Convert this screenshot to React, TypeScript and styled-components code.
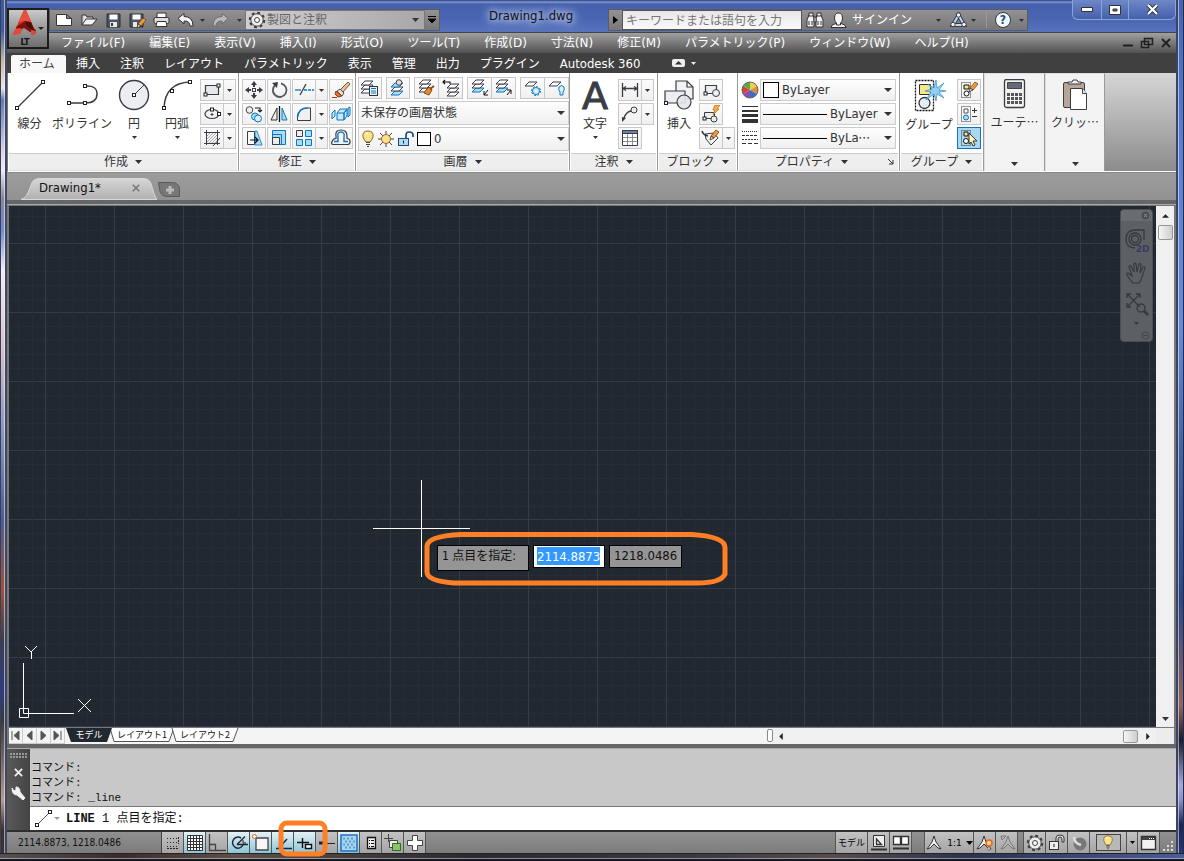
import React from "react";
import styled, { createGlobalStyle, css } from "styled-components";

const UI = `"DejaVu Sans Condensed", "Noto Sans", "Noto Sans CJK JP", sans-serif`;
const WIDE = `"DejaVu Sans", "Noto Sans", "Noto Sans CJK JP", sans-serif`;
const CJK = `"Noto Sans CJK JP", sans-serif`;
const INK = "#3a3c46";
const BLUE = "#0a76c4";
const SKY = "#a9dcf3";
const ORANGE = "#ff7f27";

const GlobalStyle = createGlobalStyle`
  *, *::before, *::after { box-sizing: border-box; }
  body { margin: 0; background: #1d2740; }
  body, button, input, select { font-family: ${UI}; font-size: 12px; line-height: 16px; color: #333; }
  button, input, select { margin: 0; padding: 0; border: 0; background: none; border-radius: 0; }
  svg { display: block; flex: none; }
`;

/* ---------- icon drawings ---------- */

const node = (x: number, y: number) => (
  <rect x={x - 1.5} y={y - 1.5} width="3" height="3" fill="#fff" stroke="#222" strokeWidth="1" />
);
const sheet = (x: number, y: number, fill = "#fff", stroke = INK) => (
  <path d={`M${x} ${y + 4}h8l4-4h-8z`} fill={fill} stroke={stroke} strokeLinejoin="round" />
);
const stack = (x: number, y: number, top = "#fff", bottom = "#fff") => (
  <g>
    {sheet(x, y + 8, bottom, bottom === "#fff" ? INK : BLUE)}
    {sheet(x, y + 4)}
    {sheet(x, y, top, top === "#fff" ? INK : BLUE)}
  </g>
);
const pencil = (x: number, y: number) => (
  <g transform={`translate(${x} ${y})`}>
    <path d="M2 6L7 0l3 2-5 6z" fill="#f39a3a" stroke="#7a4010" strokeWidth=".8" />
    <path d="M2 6l-1 4 4-2z" fill="#f5d9b5" stroke="#333" strokeWidth=".8" />
  </g>
);

type Drawing = [number, number, React.ReactNode];

const drawings: Record<string, Drawing> = {
  logo: [24, 28, <g>
    <path d="M11 0L0 25q4-2 7-2l4-7 7 3 1 6q2 0 4-2L13 0z" fill="#c92a1b" />
    <path d="M11 0L5 13l6-2 3 2 4-1-5-12z" fill="#e8503a" />
    <path d="M3 17l8-5 12 8v3l-6-1-6-4-6 3z" fill="#7c1212" />
    <path d="M11 11l7 1 4 10-8-6z" fill="#4f0c0c" />
    <path d="M0 25q0-6 6-7l4 1-3 5q-4 1-7 1zM18 20l5 1q0 4-5 4z" fill="#e34a36" />
  </g>],
  new: [18, 14, <path d="M1.500 1.500h10l5 4v7h-15zM11.500 1.500v4h5" fill="#fff" stroke="#343434" />],
  open: [17, 14, <g><path d="M1 12V2h4l1 2h6v3" fill="#ddd" stroke="#343434" /><path d="M1 12l4-6h11l-5 6z" fill="#f4f4f4" stroke="#343434" /></g>],
  save: [15, 15, <g><path d="M1 1h13v13H1z" fill="#4b5568" stroke="#2c2c2c" /><path d="M3.500 1.500h8v5h-8z" fill="#fff" /><path d="M4 9h7v5H4z" fill="#e8e8e8" /><path d="M5 10h2v3H5z" fill="#333" /></g>],
  saveAs: [17, 15, <g><path d="M1 1h13v13H1z" fill="#4b5568" stroke="#2c2c2c" /><path d="M3.500 1.500h8v5h-8z" fill="#fff" /><path d="M4 9h4v5H4z" fill="#e8e8e8" />{pencil(7, 5)}</g>],
  print: [17, 16, <g><path d="M4 1h9v5H4z" fill="#fff" stroke="#343434" /><rect x="1" y="5.500" width="15" height="6" rx="1.500" fill="#ddd" stroke="#343434" /><path d="M4 9.500h9l1 5H3z" fill="#fff" stroke="#343434" /></g>],
  undo: [17, 14, <path d="M1 5.500l6-5v3q9 0 9 9.500h-3q0-5-6-5v3z" fill="#f4f4f4" stroke="#303030" strokeLinejoin="round" />],
  redo: [17, 14, <path d="M16 5.500l-6-5v3q-9 0-9 9.500h3q0-5 6-5v3z" fill="#b8b8b8" stroke="#6c6c6c" strokeLinejoin="round" />],
  gear: [18, 18, <g><circle cx="9" cy="9" r="7" fill="none" stroke="#3a3a3a" strokeWidth="2.500" strokeDasharray="2.750 2.750" /><circle cx="9" cy="9" r="6.200" fill="#eee" stroke="#444" /><circle cx="9" cy="9" r="2.500" fill="#fff" stroke="#444" /></g>],
  binoculars: [18, 16, <g fill="#f2f2f2" stroke="#303030"><path d="M3 3h4l1 3v9H1V8zM15 3h-4l-1 3v9h7V8z" /><path d="M3 1h4v3H3zM11 1h4v3h-4zM8 5h2v5H8z" /><path d="M3 9v4M6 9v4M12 9v4M15 9v4" /></g>],
  user: [17, 17, <g fill="#f6f6f6" stroke="#303030"><path d="M1 15.500q0-3 5-4l5 0q5 1 5 4z" /><path d="M8.500 1q4 0 4 5 0 4-2 5v2h-4v-2q-2-1-2-5 0-5 4-5z" /></g>],
  exchange: [17, 16, <g fill="none"><path d="M8.500 3L3 13h11z" stroke="#333d55" strokeWidth="4" /><path d="M8.500 3L3 13h11z" stroke="#cfd6e6" strokeWidth="2" /><g fill="#f0f2f8" stroke="#333d55"><circle cx="8.500" cy="3" r="2.200" /><circle cx="3" cy="12.500" r="2.200" /><circle cx="14" cy="12.500" r="2.200" /></g></g>],
  line: [32, 32, <g><path d="M3 29L29 3" stroke={INK} strokeWidth="1.300" />{node(3, 29)}{node(29, 3)}</g>],
  polyline: [32, 32, <g><path d="M3 24h16q12 0 12-9T19 7" fill="none" stroke={INK} strokeWidth="1.500" />{node(3, 24)}{node(19, 24)}{node(19, 7)}</g>],
  circle: [32, 32, <g><circle cx="16" cy="16" r="14.500" fill="#eceef1" stroke={INK} strokeWidth="1.400" /><path d="M16 16L26 6" stroke={INK} />{node(16, 16)}</g>],
  arc: [32, 32, <g><path d="M3 29Q4 4 29 3" fill="none" stroke={INK} strokeWidth="1.400" />{node(3, 29)}{node(11, 12)}{node(29, 3)}</g>],
  rect: [20, 18, <g><path d="M3.500 4.500h13v9h-13z" fill="#e6e8ec" stroke={INK} strokeWidth="1.200" />{node(3.500, 13.500)}{node(16.500, 4.500)}</g>],
  ellipse: [20, 18, <g><ellipse cx="10" cy="9" rx="7" ry="4.500" fill="#f2f2f2" stroke={INK} strokeWidth="1.200" />{node(10, 4.500)}{node(17, 9)}<path d="M8.500 9.500h3M10 8v3" stroke={INK} /></g>],
  hatch: [20, 18, <g stroke={INK} fill="none"><path d="M4.500 1v15M15.500 1v15M2 3.500h16M2 14.500h16" /><path d="M5 7l3-3M5 10l6-6M5 13l9-9M7 14l8-8M10 14l5-5" strokeWidth=".6" stroke="#777" /><path d="M11 17l7-8" /></g>],
  move: [20, 18, <g fill={INK}><path d="M10 0l3 4h-2v2H9V4H7zM10 18l3-4h-2v-2H9v2H7zM1 9l4-3v2h2v2H5v2zM19 9l-4-3v2h-2v2h2v2z" /><rect x="8.500" y="7.500" width="3" height="3" fill="#fff" stroke={INK} /></g>],
  rotate: [20, 18, <g><path d="M7 3.500a6.800 6.800 0 1 0 5-1" fill="none" stroke="#555962" strokeWidth="1.800" /><path d="M3 2l6-1-1 6z" fill={INK} /></g>],
  trim: [20, 18, <g fill="none" strokeWidth="1.300"><path d="M1 9h6" stroke={BLUE} /><path d="M6 14L12 3" stroke={INK} /><path d="M10 9h10" stroke={BLUE} strokeDasharray="3 1" /></g>],
  erase: [20, 18, <g><path d="M9 9L17 1l2 2-7 8z" fill="#e9c394" stroke="#6b4020" strokeWidth=".9" /><path d="M6 10l3-2 4 4-2 3z" fill="#ddd" stroke="#444" strokeWidth=".9" /><path d="M5 10l6 5-4 1-3-3z" fill="#e86b35" stroke="#8a3010" strokeWidth=".9" /><path d="M1 16.500h5" stroke="#b03030" /></g>],
  copy: [20, 18, <g fill="none"><circle cx="5.500" cy="5" r="3.300" fill="#eee" stroke="#444" /><circle cx="11" cy="11.500" r="3.500" fill={SKY} stroke={BLUE} /><circle cx="14" cy="13.500" r="3.500" stroke={BLUE} fill="#d8f0fa" /><path d="M11 3h5v3M14 5l2 2 2-2" stroke="#222" strokeWidth="1.200" /></g>],
  mirror: [20, 18, <g><path d="M8 3v12H2z" fill="#eee" stroke="#333" /><path d="M10.500 1v16" stroke="#111" strokeWidth="1.300" /><path d="M13 3v12h5z" fill={SKY} stroke={BLUE} /></g>],
  fillet: [20, 18, <g fill="none"><path d="M3.500 15.500V12q1-9 10-9h3v12.500z" fill="#f0f0f0" stroke={INK} /><path d="M3.500 12q1-9 10-9" stroke={BLUE} strokeWidth="1.500" /></g>],
  explode: [20, 18, <g fill="#c9e9f7" stroke={BLUE}><path d="M1 8l3-3v6l-3 3zM6 8h7v7H6zM6 8l3-4h7l-3 4M13 8l3-4v7l-3 4zM17 3l2-1v8l-2 2z" /></g>],
  stretch: [20, 18, <g><path d="M3.500 2.500h7v13h-7z" fill="#fff" stroke={INK} /><path d="M11 2h2l5 14h-7z" fill={SKY} stroke={BLUE} strokeWidth=".8" /><path d="M6 11h8M11 8l3 3-3 3" stroke="#111" fill="none" strokeWidth="1.200" /></g>],
  scale: [20, 18, <g><path d="M3.500 1.500h13v14h-13z" fill={SKY} stroke={BLUE} /><path d="M3.500 5.500h9v10" fill="none" stroke={BLUE} /><path d="M3.500 8.500h7v7h-7z" fill="#eee" stroke={INK} /></g>],
  array: [20, 18, <g stroke={BLUE} fill={SKY}><path d="M2.500 1.500h6v6h-6z" fill="#eee" stroke={INK} /><path d="M11.500 1.500h6v6h-6zM2.500 10.500h6v6h-6zM11.500 10.500h6v6h-6z" /></g>],
  offset: [20, 18, <g fill="none"><path d="M4 12.500h4V8q-1-5 3-5t3 5v4.500h4" stroke={BLUE} strokeWidth="1.400" transform="translate(-1 0)" /><path d="M2 15.500h15q2 0 2-3t-3-3V7q0-6-6-6T5 7v2.500q-3 0-4 3t1 3z" stroke={INK} strokeWidth="1.200" /></g>],
  layerProps: [20, 18, <g>{stack(1, 2)}<rect x="9.500" y="7.500" width="8" height="9" fill="#e8f4fb" stroke="#333" /><path d="M11 9.500h5M11 12h5M11 14h5" stroke={BLUE} strokeWidth="1" /></g>],
  layerOff: [20, 18, <g>{sheet(3, 12, SKY, BLUE)}{sheet(3, 8)}{sheet(3, 4, SKY, BLUE)}<circle cx="11" cy="3.500" r="2.800" fill="#ddd" stroke="#444" /></g>],
  layerMatch: [20, 18, <g>{stack(2, 1)}<path d="M9 11l3-3 3 3-3 5-5-2z" fill="#e28a3a" stroke="#8a4a10" /><path d="M13 10l4-3" stroke="#8a4a10" strokeWidth="2" /></g>],
  layerPrev: [20, 18, <g>{stack(6, 5)}<path d="M9 5V3H2M4 1L2 3l2 2" stroke="#111" fill="none" strokeWidth="1.200" /></g>],
  layerIso: [20, 18, <g>{stack(2, 1, "#fff", SKY)}<path d="M18 11l-4 5M14 12v4h4" stroke="#111" fill="none" /></g>],
  layerUniso: [20, 18, <g>{stack(2, 1, "#fff", SKY)}<path d="M13 16l4-5M13 11h4v4" stroke="#111" fill="none" /></g>],
  layerFreeze: [20, 18, <g>{sheet(2, 3)}<g stroke={BLUE} fill="#d8effa"><circle cx="13" cy="12" r="3.500" /><circle cx="13" cy="12" r="4.500" fill="none" strokeDasharray="2 1.500" /></g></g>],
  layerBulb: [20, 18, <g>{sheet(2, 3)}<path d="M12 8q3-3 5 0 1 3-1 5v3h-3v-3q-2-2-1-5z" fill="#d8effa" stroke={BLUE} /></g>],
  bulb: [14, 18, <g><path d="M7 1q6 0 5 6-1 3-3 5H5Q3 10 2 7 1 1 7 1z" fill="#fbe28b" stroke="#8a6a20" /><path d="M5 12.500h4M5 14.500h4M6 16.500h2" stroke="#444" /><path d="M5 4q1-1 2-1" stroke="#fff" strokeWidth="1.500" fill="none" /></g>],
  sun: [16, 16, <g><path d="M8 0v16M0 8h16M2 2l12 12M14 2L2 14" stroke="#444" /><circle cx="8" cy="8" r="4.500" fill="#fbdf8a" stroke="#a06a20" /></g>],
  unlock: [17, 16, <g><rect x="1.500" y="7.500" width="10" height="7" fill={SKY} stroke="#1b4a7a" /><path d="M9 7V4q0-3 3-3 4 0 4 3v2" fill="none" stroke="#1b4a7a" strokeWidth="1.700" /><path d="M6.500 9.500v3" stroke="#123" /></g>],
  dim: [20, 18, <g stroke={INK} fill="none" strokeWidth="1.300"><path d="M2.500 2v14M17.500 2v14M3 7.500h14" /><path d="M6 5.500L3 7.500l3 2M14 5.500l3 2-3 2" /></g>],
  leader: [20, 18, <g><path d="M4 13q2-6 7-7" stroke={INK} fill="none" strokeWidth="1.300" /><path d="M2 17l0-5 4 1z" fill={INK} /><circle cx="14" cy="5" r="3" fill="#eee" stroke={INK} /></g>],
  table: [20, 18, <g><path d="M2.500 1.500h15v15h-15z" fill="#fff" stroke={INK} /><path d="M2.500 1.500h15v3h-15z" fill="#6c7fa5" stroke={INK} /><path d="M2.500 8.500h15M2.500 12.500h15M7.500 5v11M12.500 5v11" stroke="#777" strokeWidth=".8" /></g>],
  insert: [32, 32, <g stroke={INK} strokeWidth="1.200"><path d="M13 2h11l6 6v12H13zM24 2v6h6" fill="#f2f2f2" /><path d="M2 12h20v12H2z" fill="#eceef1" /><circle cx="21" cy="23" r="7" fill="#e4e6ea" fillOpacity=".9" />{node(3, 24)}</g>],
  block: [20, 18, <g stroke={INK}><path d="M4.500 4.500h11v8h-11z" fill="#eceef1" strokeWidth="1.200" /><circle cx="15" cy="12" r="3.500" fill="#eee" />{node(4.500, 12.500)}</g>],
  blockEdit: [20, 18, <g stroke={INK}><path d="M3.500 7.500h10v6h-10z" fill="#eceef1" /><circle cx="13" cy="14" r="3" fill="#eee" />{node(3.500, 13.500)}<path d="M14 0l5 0-3 4h2l-6 6 2-5h-2z" fill="#f9b23a" stroke="#b8640c" strokeWidth=".7" /></g>],
  attr: [20, 18, <g><path d="M4 5l9-1 4 5-7 7-5-6z" fill="#f2f2f2" stroke={INK} /><path d="M1 2q1 4 6 5" stroke="#333" fill="none" strokeWidth="1.500" />{pencil(8, 1)}</g>],
  wheel: [18, 18, <g><path d="M9 9V1a8 8 0 0 1 7 4z" fill="#e8d24a" /><path d="M9 9l7-4a8 8 0 0 1 0 8z" fill="#e58a35" /><path d="M9 9l7 4a8 8 0 0 1-7 4z" fill="#3a6fc8" /><path d="M9 9v8a8 8 0 0 1-7-4z" fill="#8a4db5" /><path d="M9 9l-7 4a8 8 0 0 1 0-8z" fill="#d8412f" /><path d="M9 9L2 5a8 8 0 0 1 7-4z" fill="#58a84a" /><circle cx="9" cy="9" r="8" fill="none" stroke="#666" /></g>],
  weights: [18, 18, <path d="M1 1h16v1H1zM1 5h16v2H1zM1 9h16v3H1zM1 14h16v4H1z" fill="#333" />],
  types: [18, 18, <g stroke="#333"><path d="M1 2.500h16" strokeDasharray="1 1" /><path d="M1 6.500h16" strokeDasharray="3 1" /><path d="M1 10.500h16" strokeDasharray="2 1" /><path d="M1 14.500h16" strokeDasharray="4 2" /></g>],
  group: [34, 33, <g><path d="M3.500 1.500h18v30h-18z" fill="none" stroke="#111" strokeDasharray="2 1" strokeWidth="1.300" /><path d="M7.500 5.500h11v10h-11z" fill="#f2e88a" stroke="#333" /><circle cx="12.500" cy="24" r="5.500" fill="#e4eef4" stroke="#333" strokeWidth="1.300" /><path d="M24 1l1 8 7-5-5 7 7 1-7 1 5 6-7-4-1 7-2-7-8 6 5-8-6-1 7-2-4-5 6 4z" fill="#8fd0f0" stroke="#3a8ac0" strokeWidth=".7" /></g>],
  ungroup: [20, 18, <g><path d="M2.500 1.500h9v15h-9z" fill="none" stroke="#333" strokeDasharray="1 1" /><path d="M5 4h5v4H5z" fill="#f2e88a" stroke="#111" /><circle cx="7.500" cy="12.500" r="2.500" fill="#fff" stroke="#111" />{pencil(9, 1)}</g>],
  groupEdit: [20, 18, <g><path d="M2.500 1.500h9v15h-9z" fill="none" stroke="#333" strokeDasharray="1 1" /><path d="M5 4h4v4H5z" fill="#fff" stroke="#555" /><circle cx="7" cy="12.500" r="2.500" fill={SKY} stroke={BLUE} /><path d="M13 5.500h5M15.500 3v5M13 11.500h5" stroke="#333" /></g>],
  groupSelect: [20, 18, <g><path d="M2.500 1.500h9v15h-9z" fill="none" stroke="#333" strokeDasharray="1 1" /><path d="M5 3h4v4H5z" fill="#f2e88a" stroke="#111" /><circle cx="7" cy="12" r="2.500" fill="#fff" stroke="#111" /><path d="M10 4l8 8-4 0 2 4-2 1-2-4-2 2z" fill="#fff4b8" stroke="#333" /></g>],
  calc: [24, 30, <g><rect x="1.500" y=".5" width="20" height="28" rx="2" fill="#f4f4f4" stroke={INK} strokeWidth="1.300" /><path d="M4.500 3.500h14v6h-14z" fill="#666a76" stroke="#444" /><path d="M4 15.500h15M4 19.500h15M4 23.500h15" stroke="#555" strokeWidth="3" strokeDasharray="3 1" /></g>],
  clipboard: [26, 32, <g stroke={INK}><rect x="1.500" y="3.500" width="21" height="25" rx="1.500" fill="#b9a598" /><path d="M6 5V3h4l1-2h4l1 2h3v2z" fill="#eee" /><path d="M8.500 9.500h12l4 5v16h-16z" fill="#fff" /><path d="M20.500 9.500v5h4" fill="#eee" /></g>],
  wheel2d: [26, 26, <g fill="none" stroke="#34383f" strokeWidth="1.300"><path d="M11 20q-9 0-9-9 0-9 10-9h8v10" /><circle cx="11" cy="11" r="6" /><circle cx="11" cy="11" r="3.500" /></g>],
  hand: [24, 24, <path d="M8 22q-4-4-6-8-1-2 1-2l4 3L4 6q0-2 2-1l3 6V3q1-2 2 0l1 8 2-8q2-1 2 1l-1 8 3-6q2-1 2 1l-3 9q-1 4-3 6z" fill="none" stroke="#34383f" strokeWidth="1.100" />],
  zoomExt: [24, 24, <g fill="none" stroke="#34383f" strokeWidth="1.300"><path d="M2 2l13 13M15 2L2 15M2 6V2h4M11 2h4v4M2 11v4h4" /><circle cx="16" cy="16" r="4" /><path d="M19 19l4 4" strokeWidth="2.500" /></g>],
  wrench: [15, 15, <path d="M1 2l2 3 2-1V1q4 0 4 5l5 6-2 2-6-5Q1 9 1 2z" fill="#f2f2f2" stroke="#f2f2f2" />],
  cmdLine: [18, 18, <g><path d="M2 15L15 2" stroke="#555" />{node(2, 15)}{node(15, 2)}</g>],
  snap: [18, 18, <g stroke="#222" fill="none"><path d="M3 4.500h10M3 8.500h10M3 12.500h10" strokeDasharray="1 2" /><path d="M14.500 3v7M3 14.500h12" strokeDasharray="2 1" /></g>],
  grid: [18, 18, <path d="M1.500 1.500h15v15h-15zM4.500 2v15M7.500 2v15M10.500 2v15M13.500 2v15M2 4.500h15M2 7.500h15M2 10.500h15M2 13.500h15" fill="#fff" stroke="#333" />],
  ortho: [18, 18, <path d="M1.500 0v16.500h17M1.500 10.500h6v6" fill="none" stroke="#444" strokeWidth="1.300" />],
  polar: [18, 18, <g fill="none" stroke="#223"><path d="M11 4a5.500 5.500 0 1 0 2 7" strokeWidth="1.500" /><path d="M7 10.500h11M7 10.500l8-8" strokeWidth="1.300" /><path d="M13 6v3h3" /></g>],
  osnap: [18, 18, <g><path d="M4 4h12v12H4z" fill="#f6f6f6" stroke="#444" strokeWidth="1.300" /><circle cx="2.500" cy="2.500" r="2" fill="#fff" stroke="#e8641c" /></g>],
  otrack: [18, 18, <g fill="none" stroke="#223"><path d="M2 14.500h5M9 14.500h9" strokeWidth="1.500" /><path d="M5 14l8-9" strokeWidth="1.500" /></g>],
  dyn: [18, 18, <g fill="none" stroke="#111" strokeWidth="1.400"><path d="M6.500 4v10M1 8.500h12" /><path d="M9.500 10.500h6v4h-6z" fill="#fff" /></g>],
  lwt: [18, 18, <g stroke="#222"><path d="M1 9h8" strokeWidth="3" /><path d="M9 9.500h8" /></g>],
  transp: [20, 20, <g><rect x="2" y="2" width="16" height="16" fill="#a7d5ee" stroke="#1f6fc4" strokeWidth="1.500" /><path d="M4 5.500h12M6 8.500h12M4 11.500h12M6 14.500h11" stroke="#5b9fd0" strokeDasharray="2 2" strokeWidth="2" /></g>],
  qp: [18, 18, <g><path d="M5.500 3.500h8v11h-8z" fill="#eee" stroke="#111" strokeWidth="1.300" /><path d="M7 6.500h1M9 6.500h3M7 9.500h1M9 9.500h3M7 12.500h1M9 12.500h3" stroke="#111" /></g>],
  cycle: [18, 18, <g stroke="#444"><path d="M4.500 0v8M0 4.500h9" fill="none" /><path d="M5.500 6.500h8v7h-8z" fill="#eee" /><path d="M8.500 9.500h8v7h-8z" fill="#8cc26a" stroke="#2c6a1c" /></g>],
  plus: [18, 18, <path d="M6.500 1.500h5v5h5v5h-5v5h-5v-5h-5v-5h5z" fill="#fff" stroke="#444" />],
  sheetTri: [18, 18, <g><path d="M3.500 1.500h11v11h-11z" fill="#eee" stroke="#333" /><path d="M6.500 5l5 5.500h-5z" fill="none" stroke="#333" strokeWidth="1.300" /><path d="M1 15.500h16" stroke="#333" strokeWidth="2" /></g>],
  sheets: [18, 18, <g><path d="M1.500 2.500h7v8h-7zM9.500 2.500h7v8h-7z" fill="#fff" stroke="#333" strokeWidth="1.300" /><path d="M1 14.500h16" stroke="#333" strokeWidth="2" /></g>],
  scaleA: [18, 18, <path d="M9 2l2 6 5 7-3-1-4-4-4 4-3 1 5-7z" fill="#f4f4f4" stroke="#333" />],
  scaleB: [18, 18, <g><path d="M8 2l2 6 5 7-3-1-4-4-4 4-3 1 5-7z" fill="#f4f4f4" stroke="#333" /><circle cx="13" cy="9" r="3" fill="#fdd27a" stroke="#e8641c" strokeWidth="1.500" /><path d="M12 13h2v3h-2z" fill="#fff" stroke="#555" strokeWidth=".7" /></g>],
  scaleC: [18, 18, <path d="M10 2l2 6 5 7-3-1-4-4-4 4-3 1 5-7zM3 2h5L4 6z" fill="#b8b8b8" stroke="#777" />],
  lockStatus: [18, 18, <g><rect x="1.500" y="7.500" width="9" height="8" fill="#eee" stroke="#333" /><path d="M8 7V4q0-3 4-3 4 0 4 3v4h-2V5q0-2-2-2t-2 2v2" fill="#eee" stroke="#333" /><path d="M6 10v3" stroke="#111" /></g>],
  hardware: [18, 18, <g><circle cx="10" cy="10" r="6.500" fill="#777" /><path d="M4 3q0 6 7 8" stroke="#ddd" strokeWidth="2.500" fill="none" /></g>],
  screen: [18, 18, <g><path d="M1.500 2.500h14v13h-14z" fill="#f2f2f2" stroke="#333" strokeWidth="1.400" /><path d="M2 3h13v3H2z" fill="#444" /><path d="M9 4.500h5" stroke="#fff" strokeDasharray="1 1" /></g>],
  grip: [14, 14, <path d="M10 2h2v2h-2zM6 6h2v2H6zM10 6h2v2h-2zM2 10h2v2H2zM6 10h2v2H6zM10 10h2v2h-2z" fill="#ddd" />],
  restoreDoc: [14, 12, <path d="M4.500 1.500h8v6h-8zM1.500 4.500h7v6h-7z" fill="#777" stroke="#222" strokeWidth="1.500" />],
};

const Icon = ({ name, size }: { name: string; size?: number }) => {
  const [w, h, art] = drawings[name];
  const k = size ? size / w : 1;
  return (
    <svg width={Math.round(w * k)} height={Math.round(h * k)} viewBox={`0 0 ${w} ${h}`} fill="none" aria-hidden="true">
      {art}
    </svg>
  );
};

const Caret = ({ w = 7, color = "#333" }: { w?: number; color?: string }) => (
  <svg width={w} height={Math.ceil(w / 2)} viewBox="0 0 8 4" preserveAspectRatio="none" aria-hidden="true">
    <path d="M0 0h8L4 4z" fill={color} />
  </svg>
);

const Cross = ({ size, color, weight = 2 }: { size: number; color: string; weight?: number }) => (
  <svg width={size} height={size} viewBox="0 0 10 10" aria-hidden="true">
    <path d="M1 1l8 8M9 1L1 9" stroke={color} strokeWidth={weight} />
  </svg>
);

/* ---------- window frame ---------- */

const Frame = styled.div`
  min-height: 100vh;
  display: grid;
  grid-template: 1fr 8px / 7px minmax(0, 1fr) 8px;
  background: #4763ae;
`;
const Edge = styled.div<{ $side: "left" | "right" }>`
  ${(p) => p.$side === "left" ? css`
    background: linear-gradient(#3f5aa4 0, #3d5ba4 30px, #c9b699 60px, #efe6e8 88px, #5e7cba 100px, #dcd2ea 150px, #f1e9f8 170px,
      #8a86a0 198px, #6d8cd0 230px, #f4ecf8 270px, #d8c0c8 350px, #8c98c8 430px, #4a5c98 520px, #a0503c 590px, #3c3c50 640px,
      #2c3c90 690px, #383840 720px, #b89c90 800px, #3c3034 830px);
  ` : css`
    background: linear-gradient(#4763ae 0, #5f7fd0 150px, #6b8ad4 330px, #45619f 450px, #2c4580 600px, #94655c 705px,
      #1c1c28 740px, #a8a8d8 785px, #8c90c0 800px, #1a2450 825px, #2c3c78 860px);
  `}
  border-left: ${(p) => (p.$side === "left" ? "1px solid #39404e" : "2px solid #3a4566")};
  border-right: ${(p) => (p.$side === "left" ? "2px solid #3e4860" : "1px solid #1e2c54")};
  box-shadow: inset ${(p) => (p.$side === "left" ? "-1px" : "1px")} 0 0 rgba(240, 244, 255, 0.55);
`;
const BottomEdge = styled.div`
  grid-column: 1 / -1;
  border-top: 1px solid #222;
  border-bottom: 2px solid #14171f;
  background: linear-gradient(90deg, #5a5050, #3a2c2c 10%, #5c5048 20%, #2a2a30 40%, #3c3a44 60%, #5a4c4c 70%, #2c3350 82%, #4c5c98);
  box-shadow: inset 0 -1px 0 rgba(220, 220, 230, 0.55);
`;
const Body = styled.main`
  display: flex;
  flex-direction: column;
  min-width: 0;
  position: relative;
`;

/* ---------- title bar ---------- */

const Row = styled.div<{ $gap?: number }>`
  display: flex;
  align-items: center;
  gap: ${(p) => p.$gap ?? 0}px;
`;
const TitleBar = styled.header`
  height: 32px;
  display: flex;
  align-items: flex-end;
  padding: 0 148px 1px 42px;
  background: linear-gradient(#2a3d7a 0, #7f97d2 2px, #4560ac 4px, #4a66b2 60%, #5874be);
`;
const GreyBar = styled.div`
  height: 22px;
  display: flex;
  align-items: center;
  background: linear-gradient(#929292, #777);
  border: 1px solid #5c5c5c;
`;
const AppButton = styled.button`
  position: absolute;
  left: 0;
  top: 8px;
  width: 42px;
  height: 41px;
  z-index: 2;
  border: 2px solid #1c1c1c;
  background: linear-gradient(#c9c9c9, #6d6d6d);
  display: grid;
  grid-template-columns: 28px 8px;
  align-items: center;
  justify-items: center;
`;
const AppMark = styled.span`
  display: flex;
  flex-direction: column;
  align-items: center;
  padding-left: 4px;
  font: bold 9px/9px ${UI};
  color: #111;
`;
const ToolButton = styled.button<{ $w?: number }>`
  width: ${(p) => p.$w ?? 24}px;
  height: 20px;
  display: flex;
  align-items: center;
  justify-content: center;
`;
const Select = styled.select<{ $color?: string; $latin?: boolean }>`
  appearance: none;
  flex: 1;
  width: 0;
  min-width: 0;
  height: 18px;
  color: ${(p) => p.$color ?? "#333"};
  ${(p) => p.$latin && css`font-size: 13px;`}
`;
const Workspace = styled.div`
  width: 180px;
  height: 20px;
  display: flex;
  align-items: center;
  gap: 1px;
  padding: 0 5px 0 2px;
  background: linear-gradient(90deg, #cfcfcf, #a8a8a8);
  border: 1px solid #777;
`;
const Title = styled.h1`
  flex: 1;
  margin: 0;
  align-self: center;
  padding: 1px 0 0 14px;
  text-align: center;
  font-size: 13px;
  font-weight: 400;
  color: #111;
  text-shadow: 0 0 6px #c8d4f4, 0 0 10px #c8d4f4, 0 0 12px #c8d4f4;
`;
const Search = styled.input`
  width: 180px;
  height: 20px;
  padding: 2px 3px 0;
  border: 1px solid #555;
  background: linear-gradient(#e6e6e6, #fafafa);
  &::placeholder { color: #777; opacity: 1; }
`;
const SignIn = styled.button`
  display: flex;
  align-items: center;
  gap: 5px;
  width: 97px;
  padding-left: 2px;
  color: #fff;
  white-space: nowrap;
`;
const BarDivider = styled.span`
  width: 1px;
  height: 16px;
  margin: 0 3px 0 6px;
  background: #9a9a9a;
`;
const Help = styled.span`
  width: 16px;
  height: 16px;
  border-radius: 50%;
  border: 1px solid #2c3a50;
  background: #f4f8fc;
  color: #1c4a80;
  font: bold 12px/14px ${UI};
`;
const WindowButtons = styled.div`
  position: absolute;
  right: 0;
  top: 0;
  height: 20px;
  display: flex;
  border: 1px solid #8ea2d8;
  border-top: 0;
  border-radius: 0 0 6px 6px;
  background: linear-gradient(#6f88c8, #4560ac);
`;
const WindowButton = styled.button<{ $w: number }>`
  width: ${(p) => p.$w}px;
  display: grid;
  place-items: center;
  & + & { border-left: 1px solid #8ea2d8; }
`;

/* ---------- menu and ribbon tabs ---------- */

const MenuBar = styled.nav`
  height: 21px;
  display: flex;
  align-items: center;
  gap: 24px;
  padding: 0 5px 0 54px;
  border-top: 1px solid #444;
  background: linear-gradient(#a0a0a0, #525252);
`;
const MenuItem = styled.button`
  color: #fff;
  font-family: ${WIDE};
  white-space: nowrap;
`;
const DocButtons = styled(Row)`
  margin-left: auto;
`;
const RibbonTabs = styled.div`
  height: 20px;
  display: flex;
  align-items: flex-end;
  padding-left: 4px;
  background: #404040;
`;
const RibbonTab = styled.button<{ $active?: boolean; $latin?: boolean }>`
  height: 18px;
  padding: 0 10px;
  color: #fff;
  white-space: nowrap;
  ${(p) => p.$latin && css`font-size: 13px;`}
  ${(p) => p.$active && css`
    width: 55px;
    padding: 0 8px;
    text-align: left;
    color: #444;
    background: #f8f8f8;
    border-radius: 2px 2px 0 0;
  `}
`;
const RibbonToggle = styled.button`
  align-self: center;
  display: flex;
  align-items: center;
  gap: 6px;
  margin-left: 22px;
`;

/* ---------- ribbon panels ---------- */

const Ribbon = styled.section`
  height: 99px;
  display: flex;
  border-left: 1px solid #777;
  border-bottom: 1px solid #fff;
  background: linear-gradient(#d6d6d6, #8c8c8c);
  overflow: hidden;
`;
const Panel = styled.section<{ $w: number }>`
  flex: none;
  width: ${(p) => p.$w}px;
  display: flex;
  flex-direction: column;
  background: #fff;
  border-right: 1px solid #9a9a9a;
  padding: 0 1px;
`;
const PanelBody = styled.div<{ $pad?: number; $gap?: number }>`
  height: 80px;
  display: flex;
  align-items: flex-start;
  gap: ${(p) => p.$gap ?? 1}px;
  padding: 6px ${(p) => p.$pad ?? 1}px 0;
`;
const PanelFooter = styled.button`
  height: 18px;
  display: grid;
  grid-template-columns: 1fr auto 1fr auto;
  align-items: center;
  background: #eee;
  border-top: 1px solid #ccc;
  border-bottom: 1px solid #ddd;
  white-space: nowrap;
`;
const FooterLabel = styled.span`
  grid-column: 2;
  display: flex;
  align-items: center;
  gap: 7px;
`;
const Launcher = styled.span`
  grid-column: 4;
  padding: 0 4px;
`;
const BigButton = styled.button<{ $w: number }>`
  width: ${(p) => p.$w}px;
  height: 68px;
  display: flex;
  flex-direction: column;
  align-items: center;
  white-space: nowrap;
  > svg + span { margin-top: 5px; }
  > span + svg { margin-top: 4px; }
`;
const BigLetter = styled.span`
  height: 33px;
  font: 38px/34px "DejaVu Sans", sans-serif;
  color: ${INK};
  -webkit-text-stroke: 1px ${INK};
  + span { margin-top: 4px; }
`;
const ButtonGrid = styled.div`
  display: flex;
  flex-direction: column;
  gap: 2px;
`;
const Group = styled.div`
  display: flex;
`;
const SmallButton = styled.button<{ $active?: boolean; $narrow?: boolean }>`
  width: ${(p) => (p.$narrow ? 13 : 24)}px;
  height: 22px;
  display: flex;
  align-items: center;
  justify-content: center;
  border: 1px solid #c8c8c8;
  background: linear-gradient(#fbfbfb, #f0f0f0);
  & + & { margin-left: -1px; }
  ${(p) => p.$active && css`background: #a8d8f4; border-color: #1670b8;`}
`;
const IconPair = styled.div`
  display: flex;
  > * { width: 25px; }
`;
const LayerColumn = styled.div`
  flex: 1;
  display: flex;
  flex-direction: column;
  gap: 2px;
  margin-top: -2px;
`;
const Combo = styled.div<{ $tall?: boolean }>`
  flex: 1;
  height: ${(p) => (p.$tall ? 24 : 22)}px;
  display: flex;
  align-items: center;
  gap: 3px;
  padding: 0 3px 0 2px;
  border: 1px solid #ccc;
  background: linear-gradient(#fdfdfd, #f0f0f0);
`;
const Swatch = styled.span<{ $size: number }>`
  flex: none;
  width: ${(p) => p.$size}px;
  height: ${(p) => p.$size}px;
  border: 1px solid #000;
  background: #fff;
`;
const LineSample = styled.span<{ $w: number }>`
  flex: none;
  width: ${(p) => p.$w}px;
  height: 1px;
  background: #000;
  margin-left: auto;
`;
const PropertyRows = styled.div`
  flex: 1;
  display: flex;
  flex-direction: column;
  gap: 2px;
`;
const CollapsedPanel = styled.button<{ $w: number }>`
  flex: none;
  width: ${(p) => p.$w}px;
  display: flex;
  flex-direction: column;
  align-items: center;
  padding-top: 5px;
  border: 1px solid #ddd;
  border-right: 1px solid #9a9a9a;
  border-bottom: 0;
  background: #f3f3f3;
  font-family: ${CJK};
  white-space: nowrap;
  > span { margin: auto 0 0; }
  > span + svg { margin: 32px 0 5px; }
`;
const CollapsedIcon = styled.div`
  height: 32px;
`;

/* ---------- drawing tabs ---------- */

const FileTabs = styled.div`
  height: 28px;
  display: flex;
  align-items: flex-end;
  padding-left: 14px;
  background: linear-gradient(#9c9c9c, #929292);
  border-top: 1px solid #888;
`;
const TabShape = styled.div<{ $w: number }>`
  position: relative;
  width: ${(p) => p.$w}px;
  height: 23px;
  display: flex;
  align-items: center;
  padding: 0 17px 2px 18px;
  justify-content: space-between;
  > svg:first-child { position: absolute; inset: 0; }
  > button { position: relative; color: #111; font-size: 13px; }
`;
const Divider = styled.div`
  height: 5px;
  background: #666;
  border-bottom: 1px solid #a8a8a8;
`;

/* ---------- drawing area ---------- */

const Workarea = styled.section`
  flex: 1;
  display: flex;
  min-height: 300px;
  border: solid #777;
  border-width: 1px 2px 0;
`;
const gridLines = (dir: string) => `linear-gradient(${dir}, #343b4c 1px, transparent 1px 14px, #262d39 14px 15px, transparent 15px 28px,
  #262d39 28px 29px, transparent 29px 42px, #262d39 42px 43px, transparent 43px 56px, #262d39 56px 57px, transparent 57px)`;
const Canvas = styled.div`
  flex: 1;
  min-width: 0;
  position: relative;
  overflow: hidden;
  background: ${gridLines("90deg")} 36px 37px / 69px 69px, ${gridLines("180deg")} 36px 37px / 69px 69px, #212830;
`;
const Crosshair = styled.svg`
  position: absolute;
  left: 364px;
  top: 274px;
`;
const Ucs = styled.svg`
  position: absolute;
  left: 8px;
  bottom: 6px;
`;
const Prompt = styled.div`
  position: absolute;
  left: 428px;
  top: 339px;
  display: flex;
  align-items: flex-start;
  gap: 4px;
`;
const PromptLabel = styled.label`
  width: 92px;
  height: 26px;
  padding: 2px 4px;
  border: 1px solid #000;
  background: #959595;
  color: #111;
  white-space: nowrap;
`;
const PromptInput = styled.input<{ $active?: boolean }>`
  width: ${(p) => (p.$active ? 63 : 73)}px;
  height: ${(p) => (p.$active ? 18 : 23)}px;
  padding: ${(p) => (p.$active ? "0" : "0 4px 2px")};
  border: ${(p) => (p.$active ? "0" : "1px solid #000")};
  background: ${(p) => (p.$active ? "#3399ff" : "#959595")};
  color: ${(p) => (p.$active ? "#fff" : "#111")};
  font-size: 13px;
`;
const ActiveField = styled.span`
  width: 72px;
  height: 23px;
  padding: 1px 3px;
  border: 1px solid #000;
  background: #fff;
  display: flex;
`;
const Marker = styled.svg`
  position: absolute;
  pointer-events: none;
  z-index: 3;
`;
const NavBar = styled.div`
  position: absolute;
  right: 3px;
  top: 3px;
  width: 33px;
  height: 133px;
  display: flex;
  flex-direction: column;
  align-items: center;
  gap: 6px;
  border: 1px solid #4a4e54;
  border-radius: 4px;
  background: #5c6065;
`;
const NavHead = styled.div`
  width: 100%;
  height: 11px;
  display: flex;
  justify-content: flex-end;
  padding: 1px 2px;
  background: #696d72;
  border-radius: 3px 3px 0 0;
`;
const NavTag = styled.span`
  position: absolute;
  right: 0;
  bottom: 0;
  font: bold 9px/9px ${WIDE};
  color: #393a62;
`;
const NavButton = styled.button`
  position: relative;
  margin-top: 1px;
`;
const NavFoot = styled.span`
  margin: auto 2px 2px auto;
`;
const Scrollbar = styled.div<{ $horizontal?: boolean }>`
  display: flex;
  flex-direction: ${(p) => (p.$horizontal ? "row" : "column")};
  align-items: center;
  background: #f0f0f0;
  flex: none;
  ${(p) => (p.$horizontal ? "width: 383px; padding: 0 6px;" : "width: 18px; padding: 8px 0 6px;")}
  > svg:last-child { margin: ${(p) => (p.$horizontal ? "0 0 0 8px" : "auto 0 0")}; }
`;
const Thumb = styled.span<{ $horizontal?: boolean }>`
  width: 15px;
  height: ${(p) => (p.$horizontal ? 13 : 15)}px;
  border: 1px solid #979797;
  border-radius: 2px;
  background: linear-gradient(90deg, #f5f5f5, #cfcfcf);
  margin: ${(p) => (p.$horizontal ? "0 0 0 auto" : "7px 0 0")};
`;
const LayoutBar = styled.div`
  height: 17px;
  display: flex;
  background: #f4f4f4;
  border: solid #777;
  border-width: 1px 2px 0;
`;
const StepButton = styled.button`
  width: 14px;
  display: grid;
  place-items: center;
  border: 1px solid #ccc;
  border-width: 0 1px 1px 0;
`;
const LayoutTab = styled.button<{ $w: number; $active?: boolean }>`
  position: relative;
  width: ${(p) => p.$w}px;
  margin-right: -4px;
  padding: 0 0 3px;
  font: 9px/12px ${CJK};
  color: ${(p) => (p.$active ? "#fff" : "#111")};
  z-index: ${(p) => (p.$active ? 1 : 0)};
  > svg { position: absolute; left: 0; top: 0; }
  > span { position: relative; }
`;
const Splitter = styled.span`
  width: 6px;
  height: 13px;
  margin: 1px 0 0 auto;
  border: 1px solid #888;
  border-radius: 2px;
  background: #fff;
`;
const Corner = styled.span`
  width: 18px;
  background: #ececec;
`;

/* ---------- command window and status bar ---------- */

const CommandWindow = styled.section`
  height: 81px;
  display: flex;
  background: #c8c8c8;
`;
const CommandSide = styled.div`
  width: 23px;
  display: flex;
  flex-direction: column;
  align-items: center;
  gap: 9px;
  padding-top: 4px;
  background: linear-gradient(90deg, #5a5a5a, #444);
`;
const CommandMain = styled.div`
  flex: 1;
  display: flex;
  flex-direction: column;
`;
const History = styled.div`
  flex: 1;
  padding: 12px 1px 0;
  font: 11px/15px "Liberation Mono", ${CJK};
  color: #111;
  white-space: pre;
`;
const CommandLine = styled.label`
  height: 24px;
  display: flex;
  align-items: center;
  padding: 0 5px;
  gap: 1px;
  border-top: 1px solid #777;
  background: #fff;
  font: 12px/16px "Liberation Mono", ${CJK};
  color: #111;
  white-space: pre;
`;
const CommandName = styled.span`
  margin-left: 5px;
`;
const CommandInput = styled.input`
  flex: 1;
  height: 18px;
`;
const StatusBar = styled.footer`
  height: 23px;
  display: flex;
  border-top: 2px solid #2f2f2f;
  background: linear-gradient(#909090, #7c7c7c);
`;
const Coordinates = styled.span`
  width: 155px;
  padding: 2px 0 0 11px;
  border-right: 1px solid #444;
  font: 10px/17px ${UI};
  color: #111;
  white-space: pre;
`;
const StatusButton = styled.button<{ $w?: number; $on?: boolean }>`
  width: ${(p) => p.$w ?? 22}px;
  display: flex;
  align-items: center;
  justify-content: center;
  gap: 4px;
  overflow: hidden;
  border-right: 1px solid #555;
  font: 9px/14px "DejaVu Sans", ${CJK};
  color: #000;
  white-space: nowrap;
  background: ${(p) => (p.$on ? "linear-gradient(#e4f2f6, #8cc4d6)" : "linear-gradient(#c2c2c2, #a4a4a4)")};
`;
const StatusGap = styled.span<{ $w?: number }>`
  ${(p) => (p.$w ? `width: ${p.$w}px;` : "flex: 1;")}
  border-right: 1px solid #555;
`;
const TrayLamp = styled.span`
  display: flex;
  justify-content: center;
  width: 25px;
  height: 17px;
  align-items: center;
  border: 1px solid #444;
  background: #b8b8b8;
`;
const GripBox = styled.span`
  width: 16px;
  display: flex;
  align-items: flex-end;
  justify-content: center;
`;

/* ---------- composed parts ---------- */

const Tool = ({ icon, split, active }: { icon: string; split?: boolean; active?: boolean }) => (
  <Group>
    <SmallButton $active={active} aria-label={icon}><Icon name={icon} /></SmallButton>
    {split && <SmallButton $narrow aria-label={`${icon} menu`}><Caret w={5} /></SmallButton>}
  </Group>
);
const Pair = ({ icons }: { icons: string[] }) => (
  <IconPair>{icons.map((n) => <SmallButton key={n} aria-label={n}><Icon name={n} /></SmallButton>)}</IconPair>
);
const Big = ({ icon, label, w, menu }: { icon: string; label: string; w: number; menu?: boolean }) => (
  <BigButton $w={w}><Icon name={icon} /><span>{label}</span>{menu && <Caret w={5} />}</BigButton>
);
const Footer = ({ label, launcher }: { label: string; launcher?: boolean }) => (
  <PanelFooter>
    <FooterLabel>{label}<Caret w={7} /></FooterLabel>
    {launcher && <Launcher><svg width="6" height="6" viewBox="0 0 6 6"><path d="M0 0l5 5M5 1v4H1" stroke="#333" fill="none" /></svg></Launcher>}
  </PanelFooter>
);

const menus = ["ファイル(F)", "編集(E)", "表示(V)", "挿入(I)", "形式(O)", "ツール(T)", "作成(D)", "寸法(N)", "修正(M)", "パラメトリック(P)", "ウィンドウ(W)", "ヘルプ(H)"];
const tabs = ["ホーム", "挿入", "注釈", "レイアウト", "パラメトリック", "表示", "管理", "出力", "プラグイン", "Autodesk 360"];
const toggles: [string, boolean][] = [["snap", false], ["grid", true], ["ortho", false], ["polar", true], ["osnap", true], ["otrack", true],
  ["dyn", true], ["lwt", false], ["transp", true], ["qp", false], ["cycle", false], ["plus", false]];
const steps = ["M2 1v9M9 1v9L4 5.500z", "M8 1v9L3 5.500z", "M3 1v9l5-4.500z", "M9 1v9M2 1v9l5-4.500z"];

export default function App() {
  return (
    <Frame>
      <GlobalStyle />
      <Edge $side="left" />
      <Body>
        <AppButton aria-label="AutoCAD LT">
          <AppMark><Icon name="logo" />LT</AppMark>
          <Caret w={6} color="#222" />
        </AppButton>
        <TitleBar>
          <GreyBar>
            <Row>
              {["new", "open", "save", "saveAs", "print", "undo"].map((n) => (
                <ToolButton key={n} aria-label={n} $w={n === "new" ? 27 : 24}><Icon name={n} /></ToolButton>
              ))}
              <ToolButton $w={11} aria-label="undo list"><Caret w={5} /></ToolButton>
              <ToolButton $w={25} aria-label="redo"><Icon name="redo" /></ToolButton>
              <ToolButton $w={12} aria-label="redo list"><Caret w={5} /></ToolButton>
            </Row>
            <Workspace>
              <Icon name="gear" />
              <Select $color="#666" aria-label="ワークスペース"><option>製図と注釈</option></Select>
              <Caret w={7} />
            </Workspace>
            <ToolButton $w={14} aria-label="カスタマイズ">
              <svg width="8" height="8" viewBox="0 0 8 8"><path d="M0 .5h8M0 3h8L4 7z" stroke="#000" fill="#000" strokeWidth="1" /></svg>
            </ToolButton>
          </GreyBar>
          <Title>Drawing1.dwg</Title>
          <GreyBar>
            <ToolButton $w={13} aria-label="展開"><svg width="5" height="8" viewBox="0 0 5 8"><path d="M0 0l5 4-5 4z" fill="#000" /></svg></ToolButton>
            <Search aria-label="検索" placeholder="キーワードまたは語句を入力" />
            <ToolButton $w={26} aria-label="検索実行"><Icon name="binoculars" /></ToolButton>
            <SignIn><Icon name="user" />サインイン</SignIn>
            <ToolButton $w={26} aria-label="サインイン メニュー"><Caret w={5} /></ToolButton>
            <ToolButton $w={15} aria-label="Exchange"><Icon name="exchange" /></ToolButton>
            <ToolButton $w={14} aria-label="Exchange メニュー"><Caret w={5} /></ToolButton>
            <BarDivider />
            <ToolButton $w={26} aria-label="ヘルプ"><Help>?</Help></ToolButton>
            <ToolButton $w={11} aria-label="ヘルプ メニュー"><Caret w={5} /></ToolButton>
          </GreyBar>
        </TitleBar>
        <WindowButtons>
          <WindowButton $w={28} aria-label="最小化"><svg width="12" height="5" viewBox="0 0 12 5"><path d="M.5.5h11v4H.5z" fill="#fff" stroke="#333" /></svg></WindowButton>
          <WindowButton $w={27} aria-label="元に戻す"><svg width="12" height="10" viewBox="0 0 12 10"><path d="M.5.5h11v9H.5zM4 4h4v2H4z" fill="#fff" fillRule="evenodd" stroke="#333" /></svg></WindowButton>
          <WindowButton $w={47} aria-label="閉じる"><svg width="13" height="11" viewBox="0 0 13 11"><path d="M2 1l9 9M11 1l-9 9" stroke="#333" strokeWidth="4" /><path d="M2 1l9 9M11 1l-9 9" stroke="#fff" strokeWidth="2.200" /></svg></WindowButton>
        </WindowButtons>
        <MenuBar>
          {menus.map((m) => <MenuItem key={m}>{m}</MenuItem>)}
          <DocButtons $gap={7}>
            <button aria-label="図面を最小化"><svg width="10" height="8" viewBox="0 0 10 8"><path d="M0 6.500h10" stroke="#222" strokeWidth="2" /></svg></button>
            <button aria-label="図面を元に戻す"><Icon name="restoreDoc" /></button>
            <button aria-label="図面を閉じる"><Cross size={10} color="#222" /></button>
          </DocButtons>
        </MenuBar>
        <RibbonTabs>
          {tabs.map((t, i) => <RibbonTab key={t} $active={i === 0} $latin={t.startsWith("A")}>{t}</RibbonTab>)}
          <RibbonToggle aria-label="リボンを最小化">
            <svg width="13" height="8" viewBox="0 0 13 8"><rect width="13" height="8" rx="2" fill="#eee" /><path d="M3 5.500h7L6.500 2z" fill="#333" /></svg>
            <Caret w={5} color="#eee" />
          </RibbonToggle>
        </RibbonTabs>

        <Ribbon>
          <Panel $w={231}>
            <PanelBody $gap={0} $pad={0}>
              <Big icon="line" label="線分" w={41} />
              <Big icon="polyline" label="ポリライン" w={64} />
              <Big icon="circle" label="円" w={40} menu />
              <Big icon="arc" label="円弧" w={46} menu />
              <ButtonGrid>
                <Tool icon="rect" split /><Tool icon="ellipse" split /><Tool icon="hatch" split />
              </ButtonGrid>
            </PanelBody>
            <Footer label="作成" />
          </Panel>
          <Panel $w={117}>
            <PanelBody $pad={2}>
              <ButtonGrid><Tool icon="move" /><Tool icon="copy" /><Tool icon="stretch" /></ButtonGrid>
              <ButtonGrid><Tool icon="rotate" /><Tool icon="mirror" /><Tool icon="scale" /></ButtonGrid>
              <ButtonGrid><Tool icon="trim" split /><Tool icon="fillet" split /><Tool icon="array" split /></ButtonGrid>
              <ButtonGrid><Tool icon="erase" /><Tool icon="explode" /><Tool icon="offset" /></ButtonGrid>
            </PanelBody>
            <Footer label="修正" />
          </Panel>
          <Panel $w={214}>
            <PanelBody>
              <LayerColumn>
                <Row $gap={4}>
                  <Tool icon="layerProps" />
                  <Tool icon="layerOff" />
                  <Pair icons={["layerMatch", "layerPrev"]} />
                  <Pair icons={["layerIso", "layerUniso"]} />
                  <Pair icons={["layerFreeze", "layerBulb"]} />
                </Row>
                <Row><Combo $tall><Select aria-label="画層状態"><option>未保存の画層状態</option></Select><Caret w={8} /></Combo></Row>
                <Row>
                  <Combo $tall>
                    <Icon name="bulb" /><Icon name="sun" /><Icon name="unlock" /><Swatch $size={14} />
                    <Select $latin aria-label="画層"><option>0</option></Select><Caret w={8} />
                  </Combo>
                </Row>
              </LayerColumn>
            </PanelBody>
            <Footer label="画層" />
          </Panel>
          <Panel $w={88}>
            <PanelBody $gap={0}>
              <BigButton $w={46}><BigLetter>A</BigLetter><span>文字</span><Caret w={5} /></BigButton>
              <ButtonGrid><Tool icon="dim" split /><Tool icon="leader" split /><Tool icon="table" /></ButtonGrid>
            </PanelBody>
            <Footer label="注釈" />
          </Panel>
          <Panel $w={80}>
            <PanelBody $gap={0} $pad={0}>
              <Big icon="insert" label="挿入" w={40} />
              <ButtonGrid><Tool icon="block" /><Tool icon="blockEdit" /><Tool icon="attr" split /></ButtonGrid>
            </PanelBody>
            <Footer label="ブロック" />
          </Panel>
          <Panel $w={162}>
            <PanelBody $pad={2}>
              <PropertyRows>
                <Row $gap={1}><Icon name="wheel" />
                  <Combo><Swatch $size={16} /><Select $latin aria-label="色"><option>ByLayer</option></Select><Caret w={8} /></Combo></Row>
                <Row $gap={1}><Icon name="weights" />
                  <Combo><LineSample $w={64} /><Select $latin aria-label="線の太さ"><option>ByLayer</option></Select><Caret w={8} /></Combo></Row>
                <Row $gap={1}><Icon name="types" />
                  <Combo><LineSample $w={64} /><Select $latin aria-label="線種"><option>ByLa⋯</option></Select><Caret w={8} /></Combo></Row>
              </PropertyRows>
            </PanelBody>
            <Footer label="プロパティ" launcher />
          </Panel>
          <Panel $w={84}>
            <PanelBody $gap={0} $pad={0}>
              <Big icon="group" label="グループ" w={56} />
              <ButtonGrid><Tool icon="ungroup" /><Tool icon="groupEdit" /><Tool icon="groupSelect" active /></ButtonGrid>
            </PanelBody>
            <Footer label="グループ" />
          </Panel>
          <CollapsedPanel $w={61}><CollapsedIcon><Icon name="calc" /></CollapsedIcon><span>ユーテ…</span><Caret w={7} /></CollapsedPanel>
          <CollapsedPanel $w={60}><CollapsedIcon><Icon name="clipboard" /></CollapsedIcon><span>クリッ…</span><Caret w={7} /></CollapsedPanel>
        </Ribbon>

        <FileTabs>
          <TabShape $w={136}>
            <svg width="136" height="23" viewBox="0 0 136 23"><defs><linearGradient id="ft" x2="0" y2="1"><stop stopColor="#d6d6d6" /><stop offset="1" stopColor="#b0b0b0" /></linearGradient></defs>
              <path d="M0 22.500q5-1 8-9l3-8q2-4 7-4h104q6 0 8 5l3 10q2 5 3 6z" fill="url(#ft)" stroke="#d8d8d8" /></svg>
            <button>Drawing1*</button>
            <button aria-label="Drawing1 を閉じる"><Cross size={8} color="#777" /></button>
          </TabShape>
          <button aria-label="新しい図面">
            <svg width="26" height="20" viewBox="0 0 26 20"><path d="M1.500 2.500h14q5 0 7 5v9H9q-4 0-6-5z" fill="#777" stroke="#5a5a5a" /><path d="M13 6v8M9 10h8" stroke="#bbb" strokeWidth="3" /></svg>
          </button>
        </FileTabs>
        <Divider />

        <Workarea>
          <Canvas>
            <Crosshair width="98" height="98" viewBox="0 0 98 98"><path d="M48.500 0v97M0 48.500h97" stroke="#fff" /></Crosshair>
            <Ucs width="76" height="76" viewBox="0 0 76 76"><g fill="none" stroke="#fff">
              <path d="M6.500 18v48M10 68.500h47M2.500 63.500h9v9h-9zM6.500 63v5.500h5" />
              <path d="M8 1l6 6 6-6M14.500 7v7M61 54l13 13M74 54L61 67" /></g></Ucs>
            <Prompt>
              <PromptLabel htmlFor="px">1 点目を指定:</PromptLabel>
              <ActiveField><PromptInput id="px" $active defaultValue="2114.8873" /></ActiveField>
              <PromptInput aria-label="Y" defaultValue="1218.0486" />
            </Prompt>
            <NavBar>
              <NavHead><svg width="9" height="9" viewBox="0 0 9 9"><circle cx="4.500" cy="4.500" r="4" fill="#4c5056" /><path d="M3 3l3 3M6 3L3 6" stroke="#8a8e94" /></svg></NavHead>
              <NavButton aria-label="ナビゲーション ホイール"><Icon name="wheel2d" /><NavTag>2D</NavTag></NavButton>
              <NavButton aria-label="画面移動"><Icon name="hand" /></NavButton>
              <NavButton aria-label="オブジェクト範囲ズーム"><Icon name="zoomExt" /></NavButton>
              <Caret w={5} color="#34383f" />
              <NavFoot><svg width="9" height="9" viewBox="0 0 9 9"><circle cx="4.500" cy="4.500" r="3.500" stroke="#40444a" fill="none" /><path d="M2.500 4.500h4" stroke="#40444a" /></svg></NavFoot>
            </NavBar>
            <Marker width="304" height="56" viewBox="0 0 304 56" style={{ left: 415, top: 325 }}>
              <path d="M37 3.500H267q34 2 34 13V43q-4 9-28 9H30Q3 50 3 41V15Q4 5 37 3.500z" fill="none" stroke={ORANGE} strokeWidth="5" />
            </Marker>
          </Canvas>
          <Scrollbar>
            <svg width="7" height="4" viewBox="0 0 8 4"><path d="M0 4h8L4 0z" fill="#222" /></svg>
            <Thumb />
            <Caret w={7} />
          </Scrollbar>
        </Workarea>
        <LayoutBar>
          {steps.map((d) => (
            <StepButton key={d} aria-label="タブ移動"><svg width="11" height="11" viewBox="0 0 11 11"><path d={d} fill="#555" stroke="#555" /></svg></StepButton>
          ))}
          <LayoutTab $w={48} $active><svg width="48" height="14" viewBox="0 0 48 14"><path d="M1 0h46l-5 14H6z" fill="#212830" /></svg><span>モデル</span></LayoutTab>
          <LayoutTab $w={66}><svg width="66" height="14" viewBox="0 0 66 14"><path d="M1 0l4 13.500h55L65 0" fill="#fff" stroke="#555" /></svg><span>レイアウト1</span></LayoutTab>
          <LayoutTab $w={68}><svg width="68" height="14" viewBox="0 0 68 14"><path d="M1 0l4 13.500h57L67 0" fill="#fff" stroke="#555" /></svg><span>レイアウト2</span></LayoutTab>
          <Splitter />
          <Scrollbar $horizontal>
            <svg width="4" height="7" viewBox="0 0 4 8"><path d="M4 0v8L0 4z" fill="#222" /></svg>
            <Thumb $horizontal />
            <svg width="4" height="7" viewBox="0 0 4 8"><path d="M0 0v8l4-4z" fill="#222" /></svg>
          </Scrollbar>
          <Corner />
        </LayoutBar>
        <Divider />

        <CommandWindow>
          <CommandSide>
            <svg width="18" height="6" viewBox="0 0 18 6"><path d="M0 1h18M0 4h18" stroke="#999" strokeWidth="2" strokeDasharray="2 1" /></svg>
            <button aria-label="閉じる"><Cross size={9} color="#f2f2f2" /></button>
            <button aria-label="カスタマイズ"><Icon name="wrench" /></button>
          </CommandSide>
          <CommandMain>
            <History>{"コマンド:\nコマンド:\nコマンド: _line"}</History>
            <CommandLine>
              <Icon name="cmdLine" /><Caret w={6} color="#999" />
              <CommandName><b>LINE</b> 1 点目を指定:</CommandName>
              <CommandInput aria-label="コマンド入力" />
            </CommandLine>
          </CommandMain>
        </CommandWindow>
        <StatusBar>
          <Coordinates>2114.8873, 1218.0486</Coordinates>
          {toggles.map(([n, on]) => <StatusButton key={n} $on={on} aria-label={n}><Icon name={n} /></StatusButton>)}
          <StatusGap />
          <StatusButton $w={32}>モデル</StatusButton>
          <StatusButton aria-label="レイアウト"><Icon name="sheetTri" /></StatusButton>
          <StatusButton aria-label="クイックビュー"><Icon name="sheets" /></StatusButton>
          <StatusGap $w={13} />
          <StatusButton $w={49}><Icon name="scaleA" />1:1<Caret w={7} color="#000" /></StatusButton>
          <StatusButton aria-label="注釈の表示"><Icon name="scaleB" /></StatusButton>
          <StatusButton aria-label="注釈の自動追加"><Icon name="scaleC" /></StatusButton>
          <StatusGap $w={6} />
          <StatusButton aria-label="ワークスペース切り替え"><Icon name="gear" /></StatusButton>
          <StatusButton aria-label="ロック"><Icon name="lockStatus" /></StatusButton>
          <StatusButton aria-label="ハードウェア"><Icon name="hardware" /></StatusButton>
          <StatusButton $w={37} aria-label="通知"><TrayLamp><Icon name="bulb" size={12} /></TrayLamp></StatusButton>
          <StatusButton $w={11} aria-label="メニュー"><Caret w={5} color="#000" /></StatusButton>
          <StatusButton aria-label="フルスクリーン"><Icon name="screen" /></StatusButton>
          <GripBox><Icon name="grip" /></GripBox>
        </StatusBar>
        <Marker width="50" height="38" viewBox="0 0 50 38" style={{ left: 271, bottom: -5 }}>
          <rect x="3" y="3" width="44" height="31" rx="6" fill="none" stroke={ORANGE} strokeWidth="5" />
        </Marker>
      </Body>
      <Edge $side="right" />
      <BottomEdge />
    </Frame>
  );
}
